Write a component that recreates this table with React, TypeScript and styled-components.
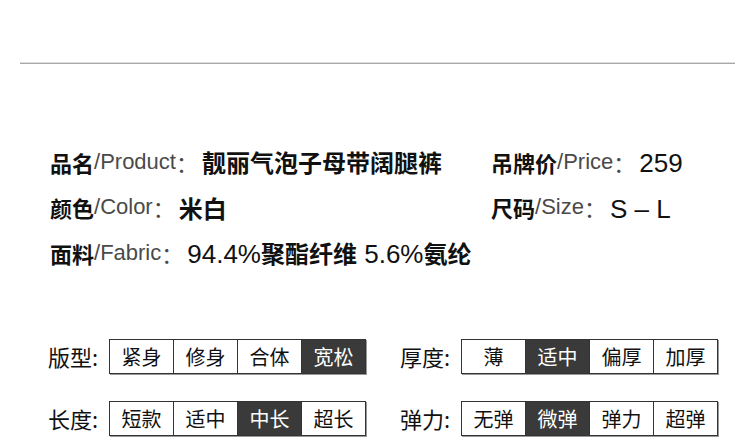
import React from "react";
import styled, { createGlobalStyle } from "styled-components";

const Global = createGlobalStyle`
  html, body { margin: 0; padding: 0; background: #fff; }
  body { font-family: "Liberation Sans", "Noto Sans CJK SC", sans-serif; color: #111; }
`;

const Page = styled.div`
  width: 750px;
  height: 445px;
  overflow: hidden;
  background: #fff;
  padding-top: 62px;
  box-sizing: border-box;
`;

const Rule = styled.div`
  margin: 0 15px 0 20px;
  height: 1px;
  background: #a8a8a8;
  border-top: 1px solid #dcdcdc;
`;

const Info = styled.div`
  display: grid;
  grid-template-columns: 441px auto;
  grid-auto-rows: 45.5px;
  padding: 75px 0 0 50px;
`;

const InfoRow = styled.div<{ $span?: boolean }>`
  display: flex;
  align-items: center;
  white-space: nowrap;
  ${(p) => (p.$span ? "grid-column: 1 / span 2;" : "")}
`;

const Key = styled.span`
  font-family: "Noto Sans CJK SC", sans-serif;
  font-size: 22px;
  font-weight: 700;
  color: #111;
`;

const En = styled.span`
  font-family: "Liberation Sans", "Noto Sans CJK SC", sans-serif;
  font-size: 22px;
  color: #4a4a4a;
`;

const Colon = styled.span`
  font-family: "Noto Sans CJK SC", sans-serif;
  font-size: 22px;
  color: #4a4a4a;
  width: 26px;
`;

const Value = styled.span`
  font-family: "Noto Sans CJK SC", sans-serif;
  font-size: 24px;
  font-weight: 700;
  color: #111;
`;

const Num = styled.span`
  font-family: "Liberation Sans", sans-serif;
  font-size: 26px;
  font-weight: 400;
  color: #111;
`;

const Specs = styled.div`
  display: grid;
  grid-template-columns: 317px 315px;
  column-gap: 35px;
  row-gap: 27px;
  padding: 0 0 0 48px;
  margin-top: 63px;
`;

const Spec = styled.div`
  display: flex;
  align-items: center;
`;

const SpecLabel = styled.span`
  font-family: "Noto Sans CJK SC", sans-serif;
  font-size: 22px;
  color: #111;
  width: 61px;
  flex: none;
`;

const Options = styled.div`
  display: flex;
  border: 1px solid #333;
  box-shadow: 1px 1px 0 #999;
`;

const Option = styled.div<{ $on?: boolean }>`
  width: 63px;
  height: 33px;
  display: flex;
  align-items: center;
  justify-content: center;
  font-family: "Noto Sans CJK SC", sans-serif;
  font-size: 20px;
  background: ${(p) => (p.$on ? "#3a3a3a" : "#fff")};
  color: ${(p) => (p.$on ? "#fff" : "#111")};
  & + & { border-left: 1px solid #333; }
`;

const specs: { label: string; options: string[]; on: number }[] = [
  { label: "版型:", options: ["紧身", "修身", "合体", "宽松"], on: 3 },
  { label: "厚度:", options: ["薄", "适中", "偏厚", "加厚"], on: 1 },
  { label: "长度:", options: ["短款", "适中", "中长", "超长"], on: 2 },
  { label: "弹力:", options: ["无弹", "微弹", "弹力", "超弹"], on: 1 },
];

function Segments({ text }: { text: string }) {
  const parts = text.match(/[\x00-\x7f\u2013]+|[^\x00-\x7f\u2013]+/g) || [];
  return (
    <Value>
      {parts.map((p, i) =>
        /^[\x00-\x7f\u2013]+$/.test(p) ? <Num key={i}>{p}</Num> : <React.Fragment key={i}>{p}</React.Fragment>
      )}
    </Value>
  );
}

function Field({ k, en, v, span }: { k: string; en: string; v: string; span?: boolean }) {
  return (
    <InfoRow $span={span}>
      <Key>{k}</Key>
      <En>{en}</En>
      <Colon>：</Colon>
      <Segments text={v} />
    </InfoRow>
  );
}

export default function App() {
  return (
    <Page>
      <Global />
      <Rule />
      <Info>
        <Field k="品名" en="/Product" v="靓丽气泡子母带阔腿裤" />
        <Field k="吊牌价" en="/Price" v="259" />
        <Field k="颜色" en="/Color" v="米白" />
        <Field k="尺码" en="/Size" v="S – L" />
        <Field k="面料" en="/Fabric" v="94.4%聚酯纤维 5.6%氨纶" span />
      </Info>
      <Specs>
        {specs.map((s) => (
          <Spec key={s.label}>
            <SpecLabel>{s.label}</SpecLabel>
            <Options>
              {s.options.map((o, i) => (
                <Option key={o + i} $on={i === s.on}>
                  {o}
                </Option>
              ))}
            </Options>
          </Spec>
        ))}
      </Specs>
    </Page>
  );
}
